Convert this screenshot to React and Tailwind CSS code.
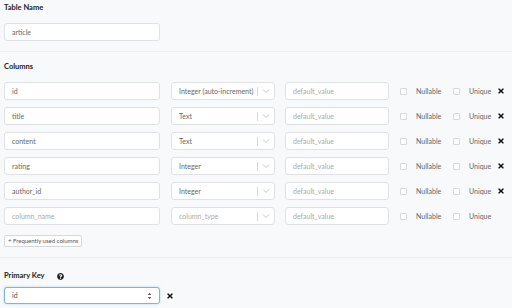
import { FaTimes, FaQuestionCircle } from "react-icons/fa";

const rows = [
  { name: "id", type: "Integer (auto-increment)", x: true },
  { name: "title", type: "Text", x: true },
  { name: "content", type: "Text", x: true },
  { name: "rating", type: "Integer", x: true },
  { name: "author_id", type: "Integer", x: true },
  { name: "", type: "", x: false },
];

const Check = ({ label, width }) => (
  <div className={`flex items-center ${width}`}>
    <span className="w-[7px] h-[7px] border border-[#d6d9dd] rounded-[1px] bg-white" />
    <span className="ml-[9px] text-[7px] text-[#666]">{label}</span>
  </div>
);

const App = () => {
  return (
    <main
      className="w-[512px] h-[308px] bg-[#f8f9fa] overflow-hidden text-[#333]"
      style={{ fontFamily: "Lato, 'Open Sans', sans-serif" }}
    >
      <div className="pl-[4px] pt-[3px]">
        <h4 className="text-[7.5px] font-bold leading-[10px] text-[#222]">Table Name</h4>
        <div className="mt-[10px] w-[156px] h-[18px] bg-white border border-[#dfe1e5] rounded-[3px] flex items-center px-[7px] text-[7px] text-[#666]">
          article
        </div>
      </div>
      <div className="mt-[10px] border-t border-[#eceef1]" />

      <div className="pl-[4px] pt-[10px]">
        <h4 className="text-[7.5px] font-bold leading-[10px] text-[#222]">Columns</h4>
        <div className="mt-[10px] flex flex-col gap-[7px]">
          {rows.map((r, i) => (
            <div key={i} className="flex items-center h-[18px]">
              <div className="w-[156px] h-[18px] bg-white border border-[#dfe1e5] rounded-[3px] flex items-center px-[7px] text-[7px]">
                {r.name ? (
                  <span className="text-[#666]">{r.name}</span>
                ) : (
                  <span className="text-[#aaa]">column_name</span>
                )}
              </div>
              <div className="ml-[11px] w-[104px] h-[18px] bg-white border border-[#dfe1e5] rounded-[3px] flex items-center text-[7px]">
                <span className={`flex-1 pl-[7px] ${r.type ? "text-[#666]" : "text-[#aaa]"}`}>
                  {r.type || "column_type"}
                </span>
                <span className="w-px h-[9px] bg-[#d6d8db]" />
                <svg width="16" height="10" viewBox="0 0 16 10" className="text-[#b5b8bc]">
                  <path d="M5 3.5 L8 6.5 L11 3.5" fill="none" stroke="currentColor" strokeWidth="0.8" />
                </svg>
              </div>
              <div className="ml-[10px] w-[104px] h-[18px] bg-white border border-[#dfe1e5] rounded-[3px] flex items-center px-[7px] text-[7px] text-[#aaa]">
                default_value
              </div>
              <div className="ml-[11px] flex items-center">
                <Check label="Nullable" width="w-[53px]" />
                <Check label="Unique" width="w-[44px]" />
                {r.x && <FaTimes className="text-[#111]" size={8} />}
              </div>
            </div>
          ))}
        </div>
        <div className="mt-[8px] inline-flex items-center h-[12px] px-[3px] bg-white border border-[#d6d8db] rounded-[2px] text-[6px] text-[#555]">
          + Frequently used columns
        </div>
      </div>
      <div className="mt-[8px] border-t border-[#eceef1]" />

      <div className="pl-[4px] pt-[13px]">
        <div className="flex items-center h-[10px]">
          <h4 className="text-[7.5px] font-bold text-[#222]">Primary Key</h4>
          <FaQuestionCircle className="ml-[13px] text-[#222]" size={7} />
        </div>
        <div className="mt-[6px] flex items-center">
          <div className="w-[156px] h-[17px] bg-white border border-[#7fb1e3] rounded-[3px] shadow-[0_0_2px_rgba(102,175,233,0.6)] flex items-center px-[7px] text-[7px] text-[#555]">
            <span className="flex-1">id</span>
            <svg width="5" height="8" viewBox="0 0 5 8" className="text-[#666]">
              <path d="M0.5 3 L2.5 0.8 L4.5 3 Z M0.5 5 L2.5 7.2 L4.5 5 Z" fill="currentColor" />
            </svg>
          </div>
          <FaTimes className="ml-[6px] text-[#111]" size={8} />
        </div>
      </div>
    </main>
  );
};

export default App;
